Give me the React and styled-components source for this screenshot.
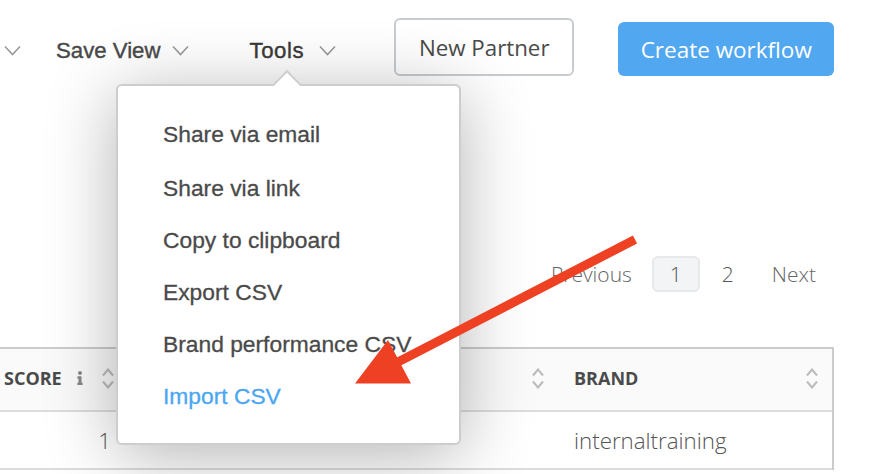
import styled, { createGlobalStyle } from "styled-components";
import { FaInfo } from "react-icons/fa";

const GlobalStyle = createGlobalStyle`
  html, body {
    margin: 0;
    padding: 0;
    background: #fff;
  }
`;

const menuItems = [
  "Share via email",
  "Share via link",
  "Copy to clipboard",
  "Export CSV",
  "Brand performance CSV",
];

function Chevron() {
  return (
    <ChevronIcon viewBox="0 0 17 11">
      <path d="M1 1.5l7.5 8 7.5-8" fill="none" stroke="#999" strokeWidth="1.6" />
    </ChevronIcon>
  );
}

function SortIcon({ right = 10 }) {
  return (
    <SortSvg viewBox="0 0 12 21" $right={right}>
      <path d="M1 7.5l5-6 5 6M1 13.5l5 6 5-6" fill="none" stroke="#bbb" strokeWidth="2" />
    </SortSvg>
  );
}

function App() {
  return (
    <>
      <GlobalStyle />
      <Page>
        <Toolbar>
          <Chevron />
          <ToolGroup $left={35} $gap={12}>
            <ToolLabel>Save View</ToolLabel>
            <Chevron />
          </ToolGroup>
          <ToolGroup $left={60} $gap={15}>
            <ToolLabel $dark>Tools</ToolLabel>
            <Chevron />
          </ToolGroup>
          <OutlineButton>New Partner</OutlineButton>
          <PrimaryButton>Create workflow</PrimaryButton>
        </Toolbar>

        <Pagination>
          <PageLink>Previous</PageLink>
          <CurrentPage>1</CurrentPage>
          <PageNumber>2</PageNumber>
          <PageLink>Next</PageLink>
        </Pagination>

        <Table>
          <HeaderRow>
            <ScoreHead>
              SCORE
              <InfoIcon>
                <FaInfo size={14} />
              </InfoIcon>
              <SortIcon />
            </ScoreHead>
            <MiddleHead>
              <SortIcon />
            </MiddleHead>
            <BrandHead>
              BRAND
              <SortIcon right={14} />
            </BrandHead>
          </HeaderRow>
          <BodyRow>
            <ScoreCell>1</ScoreCell>
            <div />
            <BrandCell>internaltraining</BrandCell>
          </BodyRow>
        </Table>

        <Menu>
          <Caret />
          {menuItems.map((item) => (
            <MenuItem key={item}>{item}</MenuItem>
          ))}
          <MenuItem $active>Import CSV</MenuItem>
        </Menu>

        <Arrow viewBox="0 0 880 474">
          <path d="M635 239.500L398 362" stroke="#ee4123" strokeWidth="9" fill="none" />
          <path d="M355 383.500L388 340L411 383.500Z" fill="#ee4123" />
        </Arrow>
      </Page>
    </>
  );
}

const Page = styled.div`
  position: relative;
  width: 880px;
  height: 474px;
  overflow: hidden;
  background: #fff;
`;

const Toolbar = styled.div`
  display: flex;
  align-items: flex-start;
  height: 76px;
  padding: 18px 0 0 4px;
  box-sizing: border-box;
`;

const ChevronIcon = styled.svg`
  width: 17px;
  height: 11px;
  margin-top: 27px;
  flex: none;
`;

const ToolGroup = styled.div`
  display: flex;
  align-items: flex-start;
  gap: ${(p) => p.$gap}px;
  margin-left: ${(p) => p.$left}px;
`;

const ToolLabel = styled.span`
  font-family: "Liberation Sans", Arial, sans-serif;
  font-size: 22.2px;
  line-height: 26px;
  margin-top: 20px;
  letter-spacing: ${(p) => (p.$dark ? "0.6px" : "0")};
  color: ${(p) => (p.$dark ? "#3a3a3a" : "#4a4a4a")};
  -webkit-text-stroke: 0.4px currentColor;
`;

const OutlineButton = styled.button`
  box-sizing: border-box;
  width: 180px;
  height: 58px;
  margin-left: 58px;
  border: 2px solid #c8ccd0;
  border-radius: 6px;
  background: #fff;
  color: #4a4a4a;
  font-family: "Open Sans", sans-serif;
  font-size: 22.300px;
  padding: 0;
`;

const PrimaryButton = styled.button`
  box-sizing: border-box;
  width: 216px;
  height: 54px;
  margin: 4px 0 0 44px;
  border: none;
  border-radius: 6px;
  background: #52a7f1;
  color: #fff;
  font-family: "Open Sans", sans-serif;
  font-size: 22.500px;
  padding: 0;
`;

const Pagination = styled.div`
  display: flex;
  align-items: center;
  justify-content: flex-end;
  height: 36px;
  margin-top: 180px;
  padding-right: 64px;
  font-family: "Open Sans", sans-serif;
  font-weight: 300;
  font-size: 21px;
  color: #555;
`;

const PageLink = styled.span`
  color: #666;
`;

const CurrentPage = styled.span`
  box-sizing: border-box;
  width: 48px;
  height: 36px;
  margin-left: 20px;
  display: flex;
  align-items: center;
  justify-content: center;
  background: #f2f4f6;
  border: 2px solid #e6e8ea;
  border-radius: 6px;
`;

const PageNumber = styled.span`
  margin: 0 38px 0 22px;
`;

const Table = styled.div`
  box-sizing: border-box;
  width: 834px;
  margin-top: 55px;
  border-top: 2px solid #ccc;
  border-right: 2px solid #ccc;
`;

const HeaderRow = styled.div`
  display: grid;
  grid-template-columns: 124px 430px 1fr;
  height: 58px;
  padding-bottom: 3px;
  background: #fafafa;
  border-bottom: 2px solid #dcdcdc;
  font-family: "Open Sans", sans-serif;
  font-weight: 700;
  font-size: 18px;
  color: #4a4a4a;
`;

const ScoreHead = styled.div`
  display: flex;
  align-items: center;
  padding-left: 4px;
`;

const InfoIcon = styled.span`
  display: flex;
  color: #888;
  margin-left: 11px;
`;

const SortSvg = styled.svg`
  width: 12px;
  height: 21px;
  margin-left: auto;
  margin-right: ${(p) => p.$right}px;
`;

const MiddleHead = styled.div`
  display: flex;
  align-items: center;
`;

const BrandHead = styled.div`
  display: flex;
  align-items: center;
  padding-left: 20px;
`;

const BodyRow = styled.div`
  display: grid;
  grid-template-columns: 124px 430px 1fr;
  height: 56px;
  border-bottom: 2px solid #dcdcdc;
  font-family: "Open Sans", sans-serif;
  font-weight: 300;
  font-size: 22.300px;
  color: #555;
  align-items: center;
`;

const ScoreCell = styled.div`
  text-align: right;
  padding-right: 13px;
`;

const BrandCell = styled.div`
  padding-left: 20px;
`;

const Menu = styled.div`
  position: absolute;
  left: 116px;
  top: 84px;
  box-sizing: border-box;
  width: 345px;
  height: 361px;
  padding: 22px 0 0 45px;
  background: #fff;
  border: 2px solid #cdcdcd;
  border-radius: 6px;
  box-shadow: 0 10px 70px rgba(0, 0, 0, 0.3);
`;

const Caret = styled.div`
  position: absolute;
  left: 159px;
  top: -12px;
  width: 20px;
  height: 20px;
  background: #fff;
  border-top: 2px solid #cdcdcd;
  border-left: 2px solid #cdcdcd;
  box-sizing: border-box;
  transform: rotate(45deg);
`;

const MenuItem = styled.div`
  height: 52px;
  line-height: 52px;
  white-space: nowrap;
  font-family: "Liberation Sans", Arial, sans-serif;
  font-size: 22.800px;
  color: ${(p) => (p.$active ? "#4ba6f2" : "#4a4a4a")};
  -webkit-text-stroke: 0.3px currentColor;

  &:nth-child(2) {
    margin-bottom: 2px;
  }
`;

const Arrow = styled.svg`
  position: absolute;
  left: 0;
  top: 0;
  width: 880px;
  height: 474px;
  pointer-events: none;
`;

export default App;
